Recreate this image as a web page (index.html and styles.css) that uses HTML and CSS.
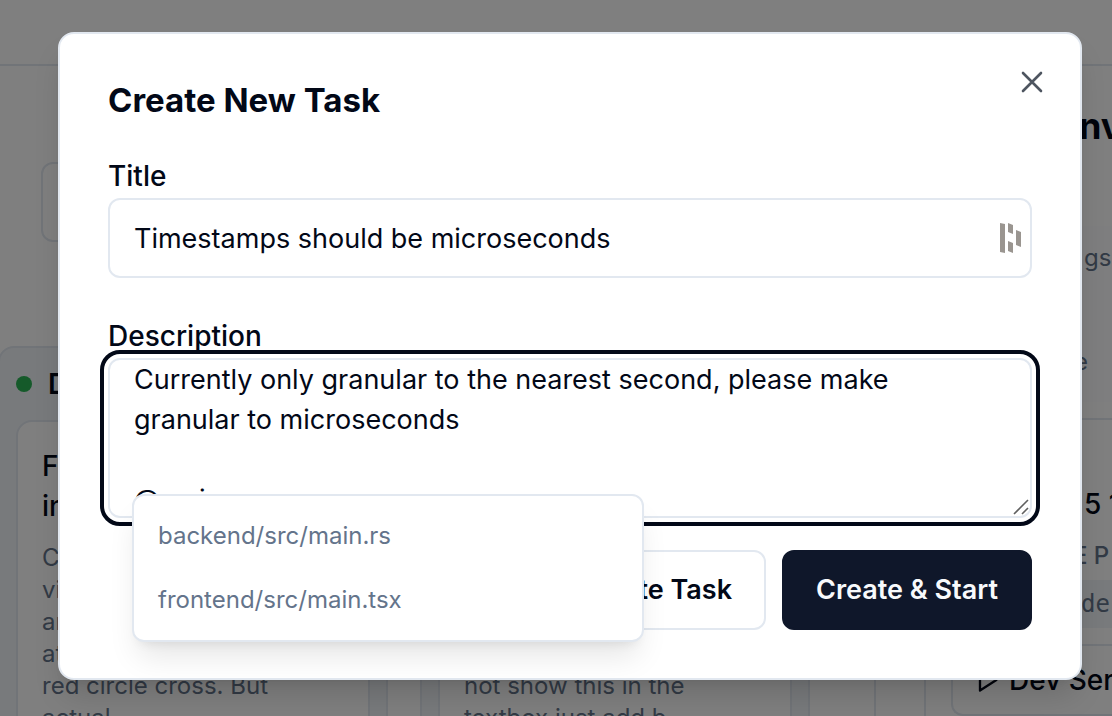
FILE: index.html
```html
<!DOCTYPE html>
<html lang="en">
<head>
<meta charset="utf-8">
<title>Create New Task</title>
<link rel="stylesheet" href="styles.css">
</head>
<body>
<div class="page">
  <header class="topbar"></header>
  <div class="workspace">
    <main class="board-area">
      <div class="search"></div>
      <div class="columns">
        <section class="column">
          <h2 class="column-title"><span class="dot"></span>D</h2>
          <article class="card">
            <h3>Fa<br>in</h3>
            <p>C<br>vi<br>an<br>at<br>red circle cross. But<br>actual</p>
          </article>
        </section>
        <section class="column">
          <h2 class="column-title"></h2>
          <article class="card">
            <h3><br><br></h3>
            <p><br><br><br><br>not show this in the<br>textbox just add b</p>
          </article>
        </section>
      </div>
    </main>
    <aside class="details">
      <h2>nv</h2>
      <div class="summary">
        <p>gs</p>
        <p class="profile">e</p>
      </div>
      <section class="panel">
        <div class="attempt">
          <h3>5 1</h3>
          <p class="caption">E P</p>
          <p class="code">de</p>
        </div>
        <div class="server">
          <svg viewBox="0 0 24 24" aria-hidden="true"><path d="M6 3l14 9-14 9z"/></svg>
          <h3>Dev Ser</h3>
        </div>
      </section>
    </aside>
  </div>
</div>
<div class="overlay">
  <form class="dialog" role="dialog" aria-labelledby="dialog-title">
    <button class="close" type="button" aria-label="Close"><svg viewBox="0 0 24 24" aria-hidden="true"><path d="M3 3l18 18M21 3L3 21"/></svg></button>
    <h1 id="dialog-title">Create New Task</h1>
    <div class="field">
      <label for="title">Title</label>
      <div class="control">
        <input id="title" type="text" value="Timestamps should be microseconds">
        <svg class="extension" viewBox="0 0 22 30" aria-hidden="true"><path d="M0 0l5 1v29l-5-1zM8 0l5 2v9l-5-2zM8 18l5 2v10l-5-2zM16 7l5 2v15l-5-2z"/></svg>
      </div>
    </div>
    <div class="field description">
      <label for="description">Description</label>
      <div class="control">
        <textarea id="description">Currently only granular to the nearest second, please make granular to microseconds

@main</textarea>
        <svg class="grip" viewBox="0 0 16 16" aria-hidden="true"><path d="M1 15L15 1M9 15l6-6"/></svg>
      </div>
      <div class="suggestions">
        <button type="button">backend/src/main.rs</button>
        <button type="button">frontend/src/main.tsx</button>
      </div>
    </div>
    <div class="actions">
      <button class="secondary" type="button">Create Task</button>
      <button class="primary" type="submit">Create &amp; Start</button>
    </div>
  </form>
</div>
</body>
</html>
```

FILE: styles.css
```css
* { box-sizing: border-box; }
body {
  margin: 0;
  height: 100vh;
  overflow: hidden;
  position: relative;
  font-family: Inter, "Liberation Sans", sans-serif;
  font-size: 28px;
  line-height: 40px;
  color: #020817;
  background: #fff;
}
h1, h2, h3, p { margin: 0; }
button, input, textarea { font: inherit; color: inherit; margin: 0; }

.page { height: 100vh; overflow: hidden; }
.topbar { height: 66px; border-bottom: 2px solid #e2e8f0; }
.workspace { display: flex; }
.board-area { width: 876px; flex: none; border-right: 2px solid #e2e8f0; }
.search {
  height: 80px;
  margin: 96px 40px 0 41px;
  border: 2px solid #e2e8f0;
  border-radius: 12px;
}
.columns { display: flex; gap: 32px; margin: 104px 0 0 -2px; }
.column {
  width: 390px;
  padding: 16px;
  background: #f1f5f9;
  border: 2px solid #e2e8f0;
  border-radius: 16px;
}
.column-title {
  display: flex;
  align-items: center;
  gap: 16px;
  height: 40px;
  margin-bottom: 16px;
  font-size: 28px;
  font-weight: 600;
}
.dot { width: 16px; height: 16px; border-radius: 50%; background: #2ab454; }
.card {
  height: 400px;
  padding: 24px;
  background: #fff;
  border: 2px solid #e2e8f0;
  border-radius: 16px;
}
.card h3 { font-size: 28px; font-weight: 500; margin-bottom: 16px; }
.card p { font-size: 24px; line-height: 32px; color: #64748b; white-space: nowrap; }

.details {
  flex: 1;
  min-width: 0;
  margin-left: 48px;
  border-left: 2px solid #e2e8f0;
  padding: 36px 0 0 25px;
  white-space: nowrap;
  overflow: hidden;
}
.details h2 { padding-left: 128px; font-size: 36px; line-height: 48px; font-weight: 700; }
.details p { font-size: 24px; line-height: 32px; color: #64748b; }
.summary {
  height: 176px;
  margin: 76px 0 16px;
  padding: 16px 0 0 133px;
  background: #fcfdfe;
}
.details .profile { margin: 72px 0 0 -10px; }
.panel {
  height: 298px;
  border: 2px solid #e2e8f0;
  border-right: 0;
  border-radius: 12px 0 0 12px;
}
.panel h3 { font-size: 28px; line-height: 40px; font-weight: 500; }
.attempt { height: 226px; padding-top: 64px; border-bottom: 2px solid #e2e8f0; }
.attempt h3 { padding-left: 131px; }
.details .caption { padding: 16px 0 8px 120px; font-weight: 500; }
.details .code {
  padding: 8px 0 8px 128px;
  background: #f1f5f9;
  font-family: "DejaVu Sans Mono", monospace;
}
.server { display: flex; align-items: center; gap: 8px; padding: 14px 0 0 20px; }
.server svg { flex: none; width: 28px; height: 28px; fill: none; stroke: #020817; stroke-width: 2; stroke-linejoin: round; }

.overlay {
  position: absolute;
  inset: 0;
  padding: 32px 30px 36px 58px;
  background: rgba(0, 0, 0, 0.5);
}
.dialog {
  position: relative;
  padding: 40px 48px 48px;
  background: #fff;
  border: 2px solid #e2e8f0;
  border-radius: 16px;
  box-shadow: 0 20px 30px -6px rgba(0, 0, 0, 0.15), 0 8px 12px -8px rgba(0, 0, 0, 0.1);
}
.close {
  position: absolute;
  top: 32px;
  right: 32px;
  width: 32px;
  height: 32px;
  padding: 4px;
  border: 0;
  background: none;
}
.close svg { display: block; fill: none; stroke: #4e5560; stroke-width: 2.6; stroke-linecap: round; }
.dialog h1 { font-size: 33px; line-height: 52px; font-weight: 700; margin-bottom: 32px; }
.field { display: flex; flex-direction: column; gap: 4px; }
.field label { line-height: 36px; font-weight: 500; }
.control { position: relative; }
input, textarea {
  display: block;
  width: 100%;
  border: 2px solid #e2e8f0;
  border-radius: 12px;
  background: #fff;
  font-size: 27px;
}
input { height: 80px; padding: 0 24px; }
.extension { position: absolute; right: 10px; top: 25px; width: 22px; height: 30px; fill: #9a9590; }
.description { position: relative; margin-top: 40px; }
textarea {
  height: 160px;
  padding: 0 40px 0 24px;
  resize: none;
  overflow: hidden;
  outline: 4px solid #020817;
  outline-offset: 4px;
}
.grip { position: absolute; right: 3px; bottom: 3px; width: 16px; height: 16px; fill: none; stroke: #606060; stroke-width: 1.6; }
.suggestions {
  position: absolute;
  left: 24px;
  top: 176px;
  width: 512px;
  padding: 8px 0;
  background: #fff;
  border: 2px solid #e2e8f0;
  border-radius: 12px;
  box-shadow: 0 20px 30px -6px rgba(0, 0, 0, 0.1), 0 8px 12px -8px rgba(0, 0, 0, 0.1);
}
.suggestions button { display: block; width: 100%; height: 64px; padding: 0 24px; border: 0; background: none; text-align: left; font-size: 24px; color: #64748b; }
.actions { display: flex; justify-content: flex-end; gap: 16px; margin-top: 32px; }
.actions button { height: 80px; padding: 0 32px; border: 2px solid #e2e8f0; border-radius: 12px; background: #fff; font-size: 27px; font-weight: 600; }
.actions .primary { background: #0f172a; border-color: #0f172a; color: #f8fafc; }
```
